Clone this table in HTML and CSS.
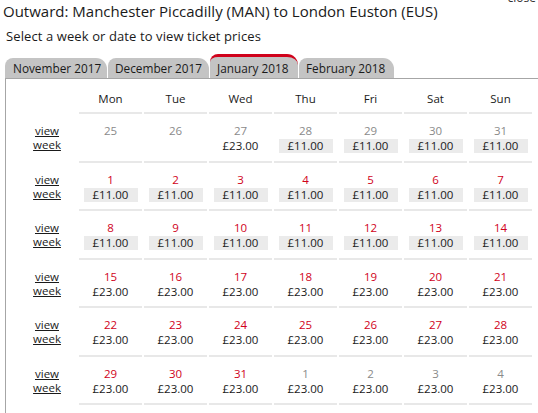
FILE: index.html
```html
<!DOCTYPE html>
<html lang="en">
<head>
<meta charset="utf-8">
<title>Ticket prices calendar</title>
<link rel="stylesheet" href="styles.css">
</head>
<body>
<a class="close" href="#">close</a>
<h1 class="title">Outward: Manchester Piccadilly (MAN) to London Euston (EUS)</h1>
<p class="subtitle">Select a week or date to view ticket prices</p>
<div class="tabs">
  <div class="tab">November 2017</div>
  <div class="tab">December 2017</div>
  <div class="tab active">January 2018</div>
  <div class="tab">February 2018</div>
</div>
<div class="panel">
  <div class="cal">
    <div class="hd blank"></div>
    <div class="hd">Mon</div><div class="hd">Tue</div><div class="hd">Wed</div><div class="hd">Thu</div><div class="hd">Fri</div><div class="hd">Sat</div><div class="hd">Sun</div>

    <div class="wk"><a href="#">view</a><a href="#">week</a></div>
    <div class="day"><span class="d other">25</span></div>
    <div class="day"><span class="d other">26</span></div>
    <div class="day"><span class="d other">27</span><span class="p">£23.00</span></div>
    <div class="day"><span class="d other">28</span><span class="p low">£11.00</span></div>
    <div class="day"><span class="d other">29</span><span class="p low">£11.00</span></div>
    <div class="day"><span class="d other">30</span><span class="p low">£11.00</span></div>
    <div class="day"><span class="d other">31</span><span class="p low">£11.00</span></div>

    <div class="wk"><a href="#">view</a><a href="#">week</a></div>
    <div class="day"><span class="d">1</span><span class="p low">£11.00</span></div>
    <div class="day"><span class="d">2</span><span class="p low">£11.00</span></div>
    <div class="day"><span class="d">3</span><span class="p low">£11.00</span></div>
    <div class="day"><span class="d">4</span><span class="p low">£11.00</span></div>
    <div class="day"><span class="d">5</span><span class="p low">£11.00</span></div>
    <div class="day"><span class="d">6</span><span class="p low">£11.00</span></div>
    <div class="day"><span class="d">7</span><span class="p low">£11.00</span></div>

    <div class="wk"><a href="#">view</a><a href="#">week</a></div>
    <div class="day"><span class="d">8</span><span class="p low">£11.00</span></div>
    <div class="day"><span class="d">9</span><span class="p low">£11.00</span></div>
    <div class="day"><span class="d">10</span><span class="p low">£11.00</span></div>
    <div class="day"><span class="d">11</span><span class="p low">£11.00</span></div>
    <div class="day"><span class="d">12</span><span class="p low">£11.00</span></div>
    <div class="day"><span class="d">13</span><span class="p low">£11.00</span></div>
    <div class="day"><span class="d">14</span><span class="p low">£11.00</span></div>

    <div class="wk"><a href="#">view</a><a href="#">week</a></div>
    <div class="day"><span class="d">15</span><span class="p">£23.00</span></div>
    <div class="day"><span class="d">16</span><span class="p">£23.00</span></div>
    <div class="day"><span class="d">17</span><span class="p">£23.00</span></div>
    <div class="day"><span class="d">18</span><span class="p">£23.00</span></div>
    <div class="day"><span class="d">19</span><span class="p">£23.00</span></div>
    <div class="day"><span class="d">20</span><span class="p">£23.00</span></div>
    <div class="day"><span class="d">21</span><span class="p">£23.00</span></div>

    <div class="wk"><a href="#">view</a><a href="#">week</a></div>
    <div class="day"><span class="d">22</span><span class="p">£23.00</span></div>
    <div class="day"><span class="d">23</span><span class="p">£23.00</span></div>
    <div class="day"><span class="d">24</span><span class="p">£23.00</span></div>
    <div class="day"><span class="d">25</span><span class="p">£23.00</span></div>
    <div class="day"><span class="d">26</span><span class="p">£23.00</span></div>
    <div class="day"><span class="d">27</span><span class="p">£23.00</span></div>
    <div class="day"><span class="d">28</span><span class="p">£23.00</span></div>

    <div class="wk"><a href="#">view</a><a href="#">week</a></div>
    <div class="day"><span class="d">29</span><span class="p">£23.00</span></div>
    <div class="day"><span class="d">30</span><span class="p">£23.00</span></div>
    <div class="day"><span class="d">31</span><span class="p">£23.00</span></div>
    <div class="day"><span class="d other">1</span><span class="p">£23.00</span></div>
    <div class="day"><span class="d other">2</span><span class="p">£23.00</span></div>
    <div class="day"><span class="d other">3</span><span class="p">£23.00</span></div>
    <div class="day"><span class="d other">4</span><span class="p">£23.00</span></div>
  </div>
</div>
</body>
</html>
```
FILE: styles.css
```css
html, body {
  margin: 0;
  padding: 0;
  background: #fff;
  overflow: hidden;
}
body {
  font-family: "Open Sans", "Liberation Sans", sans-serif;
  color: #1a1a1a;
  position: relative;
  height: 413px;
}
.close {
  position: absolute;
  top: -11px;
  right: 2px;
  font-size: 12px;
  color: #333;
  text-decoration: none;
}
.title {
  margin: 0;
  padding: 0 0 0 3px;
  font-size: 15px;
  line-height: 22px;
  font-weight: normal;
  color: #1a1a1a;
}
.subtitle {
  margin: 5px 0 0 6px;
  font-size: 13px;
  line-height: 18px;
  color: #1a1a1a;
  letter-spacing: 0.1px;
}
.tabs {
  display: grid;
  grid-template-columns: 102px 101px 88px 95px;
  column-gap: 1px;
  align-items: end;
  margin: 9px 0 0 5px;
  height: 24px;
}
.tab {
  box-sizing: border-box;
  height: 20px;
  line-height: 20px;
  padding: 0 0 0 7px;
  background: #c4c4c4;
  border-radius: 8px 11px 0 0;
  font-size: 11.8px;
  color: #1a1a1a;
  white-space: nowrap;
  overflow: hidden;
}
.tab:first-child {
  padding-left: 8px;
}
.tab.active {
  height: 24px;
  border-top: 3px solid #d0021b;
  padding-top: 1px;
  line-height: 20px;
}
.panel {
  margin-left: 5px;
  border-left: 1px solid #a6a6a6;
  border-top: 1px solid #a6a6a6;
  height: 400px;
}
.cal {
  display: grid;
  grid-template-columns: 60px repeat(7, 63px);
  grid-template-rows: 35px repeat(6, 48.5px);
  column-gap: 2px;
  padding-left: 11px;
  font-size: 11.5px;
  line-height: 14px;
  text-align: center;
}
.hd {
  box-sizing: border-box;
  padding-top: 13px;
  border-bottom: 2px solid #e8e8e8;
  color: #1a1a1a;
}
.hd.blank {
  border-bottom: none;
}
.wk {
  padding-top: 10px;
  display: flex;
  flex-direction: column;
  align-items: center;
}
.wk a {
  display: block;
  height: 14px;
  line-height: 14px;
  color: #1a1a1a;
  text-decoration: underline;
}
.day {
  box-sizing: border-box;
  padding-top: 10px;
  border-bottom: 2px solid #e8e8e8;
  display: flex;
  flex-direction: column;
  align-items: center;
}
.d {
  display: block;
  height: 14px;
  color: #d0021b;
}
.d.other {
  color: #8a8a8a;
}
.p {
  display: block;
  width: 54px;
  height: 14px;
  margin-top: 1px;
  color: #1a1a1a;
}
.p.low {
  background: #ebebeb;
}
```
